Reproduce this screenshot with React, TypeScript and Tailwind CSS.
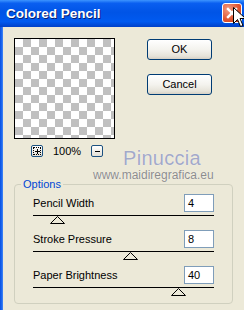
const sliders = [
  { label: "Pencil Width", value: "4", thumb: 24 },
  { label: "Stroke Pressure", value: "8", thumb: 97 },
  { label: "Paper Brightness", value: "40", thumb: 145 },
];

const XpButton = ({ text }: { text: string }) => (
  <div className="w-[65px] h-[21px] rounded-[3px] border border-[#003c74] bg-[linear-gradient(180deg,#ffffff_0%,#f4f3ee_50%,#e6e3d9_85%,#d6d0c5_100%)] flex items-center justify-center text-[11px] text-black">
    {text}
  </div>
);

const ZoomBtn = ({ plus }: { plus?: boolean }) => (
  <div className="w-[12px] h-[12px] rounded-[2px] border border-[#1c5180] bg-[linear-gradient(180deg,#ffffff,#e3e0d6)] flex items-center justify-center">
    <div className={plus ? "w-[8px] h-[8px] border border-dotted border-black flex items-center justify-center" : "w-[8px] h-[8px] flex items-center justify-center"}>
      <svg width="6" height="6" viewBox="0 0 6 6">
        <rect x="1" y="3" width="5" height="1" fill="#000" />
        {plus && <rect x="3" y="1" width="1" height="5" fill="#000" />}
      </svg>
    </div>
  </div>
);

const Thumb = ({ left }: { left: number }) => (
  <div className="relative h-[8px]">
    <svg className="absolute top-0" style={{ left: left - 7 }} width="15" height="8" viewBox="0 0 15 8">
      <polygon points="7.5,0.5 14.5,7.5 0.5,7.5" fill="#ece9d8" stroke="#000" strokeWidth="1" />
    </svg>
  </div>
);

export default function App() {
  return (
    <div className="relative w-[244px] h-[310px] overflow-hidden flex flex-col bg-[#0a4fe0] font-['Liberation_Sans',Arial,sans-serif]">
      {/* title bar */}
      <div className="relative h-[27px] shrink-0 bg-[linear-gradient(180deg,#3d95ff_0%,#0a5ff0_12%,#0054e6_45%,#005af0_80%,#0040c8_100%)] flex items-center pl-[6px] pt-[2px]">
        <span className="text-[13.5px] font-bold text-white [text-shadow:1px_1px_0_#0a1f70]">Colored Pencil</span>
        <div className="absolute left-[222px] top-[3px] w-[20px] h-[20px] rounded-[3px] border border-white bg-[radial-gradient(circle_at_30%_30%,#f29c82,#e0532f_60%,#c13a1a)] flex items-center justify-center">
          <svg width="12" height="12" viewBox="0 0 12 12">
            <path d="M2 2 L10 10 M10 2 L2 10" stroke="#fff" strokeWidth="2.4" strokeLinecap="square" />
          </svg>
        </div>
        <svg className="absolute left-[233px] top-[7px]" width="13" height="21" viewBox="0 0 13 21">
          <path d="M0.5 0.5 L0.5 16.5 L4.5 12.5 L7.5 19.5 L10 18.5 L7 11.5 L12.5 11.5 Z" fill="#fff" stroke="#000" strokeWidth="1" />
        </svg>
      </div>

      {/* body */}
      <div className="flex-1 flex">
        <div className="w-[3px] bg-[linear-gradient(90deg,#0a4fe0,#1d6af0_60%,#4a8af5)]" />
        <div className="flex-1 bg-[#ece9d8] text-[11px] text-black">
          <div className="flex pt-[11px] pl-[11px]">
            <div className="w-[101px] h-[101px] border border-black bg-[image:conic-gradient(#c0c0c0_25%,#fff_0_50%,#c0c0c0_0_75%,#fff_0)] bg-[length:16px_16px]" />
            <div className="ml-[32px] pt-[1px] flex flex-col gap-[14px]">
              <XpButton text="OK" />
              <XpButton text="Cancel" />
            </div>
          </div>

          <div className="flex items-center mt-[6px] pl-[28px]">
            <ZoomBtn plus />
            <span className="ml-[10px] leading-[12px]">100%</span>
            <div className="ml-[10px]">
              <ZoomBtn />
            </div>
          </div>

          <div className="relative mt-[27px] ml-[11px] w-[219px] h-[120px] rounded-[4px] border border-[#d0d0bf] pt-[9px] px-[18px]">
            <span className="absolute -top-[8px] left-[6px] px-[2px] bg-[#ece9d8] text-[#0046d5] leading-[14px]">Options</span>
            <div className="flex flex-col gap-[6px]">
              {sliders.map((s) => (
                <div key={s.label}>
                  <div className="flex items-center justify-between h-[18px]">
                    <span>{s.label}</span>
                    <div className="w-[30px] h-[18px] border border-[#7f9db9] bg-white pl-[3px] leading-[16px]">{s.value}</div>
                  </div>
                  <div className="mt-[3px] h-px bg-black" />
                  <Thumb left={s.thumb} />
                </div>
              ))}
            </div>
          </div>
        </div>
      </div>

      {/* watermark over the dialog */}
      <span className="absolute left-[123px] top-[147px] text-[20px] leading-[22px] tracking-[0.3px] text-[#a3a9c8] [text-shadow:0_0_1px_#ffffff]">Pinuccia</span>
      <span className="absolute left-[93px] top-[168px] text-[12px] leading-[14px] text-[#8c8c8c] [text-shadow:0_0_1px_#ffffff]">www.maidiregrafica.eu</span>
    </div>
  );
}
